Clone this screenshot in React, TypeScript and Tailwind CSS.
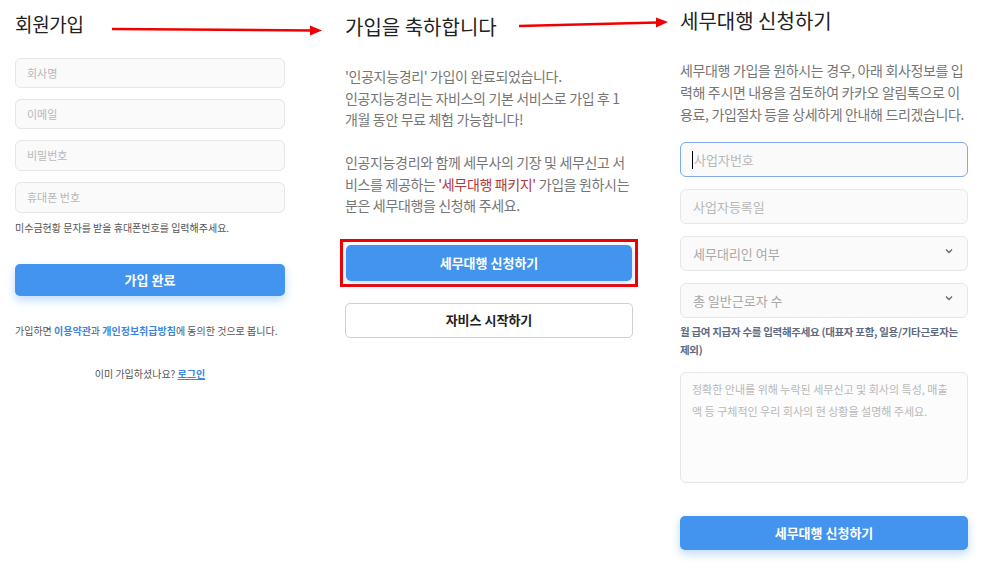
import React from "react";

const font = { fontFamily: '"Noto Sans CJK KR", "Noto Sans", sans-serif' };

function Field({ label, className = "" }: { label: string; className?: string }) {
  return (
    <div
      className={`flex items-center rounded-md border border-[#e6e6e6] bg-[#fafafa] px-[11px] text-[11px] text-[#b8b8b8] ${className}`}
    >
      {label}
    </div>
  );
}

function Select({ label }: { label: string }) {
  return (
    <div className="flex h-[35px] items-center justify-between rounded-md border border-[#e6e6e6] bg-[#fafafa] pl-[12px] pr-[14px] text-[13px] text-[#a8a8a8]">
      <span>{label}</span>
      <svg width="8" height="6" viewBox="0 0 8 6" className="-mt-[6px]">
        <path d="M1 1.5 L4 4.5 L7 1.5" fill="none" stroke="#666" strokeWidth="1.3" />
      </svg>
    </div>
  );
}

// Red flow arrows linking the three steps
function Arrows() {
  return (
    <svg className="pointer-events-none absolute left-0 top-0" width="986" height="563">
      <line x1="112" y1="29" x2="312" y2="30.5" stroke="#f00000" strokeWidth="2.5" />
      <polygon points="310,25.5 322,30.5 310,35.5" fill="#f00000" />
      <line x1="519" y1="26" x2="658" y2="22.5" stroke="#f00000" strokeWidth="2.5" />
      <polygon points="656,17.5 668,22 656,27.5" fill="#f00000" />
    </svg>
  );
}

export default function App() {
  return (
    <div className="relative h-[563px] w-[986px] overflow-hidden bg-white" style={font}>
      <div className="flex">
        {/* 회원가입 */}
        <div className="ml-[15px] flex w-[270px] flex-col pt-[10px]">
          <h1 className="h-[28px] text-[19px] leading-[28px] tracking-[-0.3px] text-[#222]">회원가입</h1>
          <div className="mt-[20px] flex flex-col gap-[11px]">
            <Field label="회사명" className="h-[30px]" />
            <Field label="이메일" className="h-[30px]" />
            <Field label="비밀번호" className="h-[31px]" />
            <Field label="휴대폰 번호" className="h-[31px]" />
          </div>
          <p className="mt-[8px] text-[10px] leading-[14px] text-[#555]">
            미수금현황 문자를 받을 휴대폰번호를 입력해주세요.
          </p>
          <button className="mt-[29px] h-[32px] rounded-[5px] bg-[#4294ee] text-[13px] font-bold text-white shadow-[0_4px_10px_rgba(66,148,238,0.35)]">
            가입 완료
          </button>
          <p className="mt-[28px] text-[10px] leading-[14px] text-[#555]">
            가입하면 <span className="font-bold text-[#3b86e0]">이용약관</span>과{" "}
            <span className="font-bold text-[#3b86e0]">개인정보취급방침</span>에 동의한 것으로 봅니다.
          </p>
          <p className="mt-[29px] text-center text-[10px] leading-[14px] text-[#555]">
            이미 가입하셨나요? <span className="font-bold text-[#3b86e0] underline">로그인</span>
          </p>
        </div>

        {/* 가입을 축하합니다 */}
        <div className="ml-[60px] flex w-[288px] flex-col pt-[13px]">
          <h1 className="h-[28px] text-[20px] leading-[28px] text-[#222]">가입을 축하합니다</h1>
          <div className="mt-[25px] whitespace-nowrap text-[14px] leading-[21.5px] tracking-[-0.35px] text-[#767676]">
            <p>'인공지능경리' 가입이 완료되었습니다.</p>
            <p>인공지능경리는 자비스의 기본 서비스로 가입 후 1</p>
            <p>개월 동안 무료 체험 가능합니다!</p>
            <p className="mt-[21.5px]">인공지능경리와 함께 세무사의 기장 및 세무신고 서</p>
            <p>
              비스를 제공하는 <span className="text-[#b03a3a]">'세무대행 패키지'</span> 가입을 원하시는
            </p>
            <p>분은 세무대행을 신청해 주세요.</p>
          </div>
          <div className="-mx-[5px] mt-[22px] border-[3px] border-[#ee0000] p-[3px]">
            <button className="h-[36px] w-full rounded-[5px] bg-[#4294ee] text-[13px] font-bold text-white shadow-[0_3px_8px_rgba(66,148,238,0.3)]">
              세무대행 신청하기
            </button>
          </div>
          <button className="mt-[16px] h-[35px] rounded-[5px] border border-[#d0d0d0] bg-white text-[13px] font-bold text-[#222]">
            자비스 시작하기
          </button>
        </div>

        {/* 세무대행 신청하기 */}
        <div className="ml-[47px] flex w-[288px] flex-col pt-[7px]">
          <h1 className="h-[28px] text-[20px] leading-[28px] text-[#222]">세무대행 신청하기</h1>
          <div className="mt-[24px] whitespace-nowrap text-[14px] leading-[22px] tracking-[-0.35px] text-[#767676]">
            <p>세무대행 가입을 원하시는 경우, 아래 회사정보를 입</p>
            <p>력해 주시면 내용을 검토하여 카카오 알림톡으로 이</p>
            <p>용료, 가입절차 등을 상세하게 안내해 드리겠습니다.</p>
          </div>
          <div className="mt-[17px] flex h-[35px] items-center rounded-md border border-[#7fabe8] bg-[#fafafa] pl-[11px] text-[13px] text-[#b8b8b8]">
            <span className="mr-px h-[18px] w-px bg-black" />
            사업자번호
          </div>
          <Field label="사업자등록일" className="mt-[12px] h-[35px] !px-[12px] !text-[13px]" />
          <div className="mt-[12px]">
            <Select label="세무대리인 여부" />
          </div>
          <div className="mt-[12px]">
            <Select label="총 일반근로자 수" />
          </div>
          <p className="mt-[5px] text-[10.5px] font-bold leading-[18px] tracking-[-0.3px] text-[#5d6b82]">
            월 급여 지급자 수를 입력해주세요 (대표자 포함, 일용/기타근로자는 제외)
          </p>
          <div className="mt-[13px] h-[111px] rounded-md border border-[#e6e6e6] bg-[#fcfcfc] px-[11px] pt-[5px] text-[11px] leading-[22px] text-[#b8b8b8]">
            정확한 안내를 위해 누락된 세무신고 및 회사의 특성, 매출액 등 구체적인 우리 회사의 현 상황을 설명해 주세요.
          </div>
          <button className="mt-[33px] h-[34px] rounded-[5px] bg-[#4294ee] text-[13px] font-bold text-white shadow-[0_4px_10px_rgba(66,148,238,0.35)]">
            세무대행 신청하기
          </button>
        </div>
      </div>
      <Arrows />
    </div>
  );
}
